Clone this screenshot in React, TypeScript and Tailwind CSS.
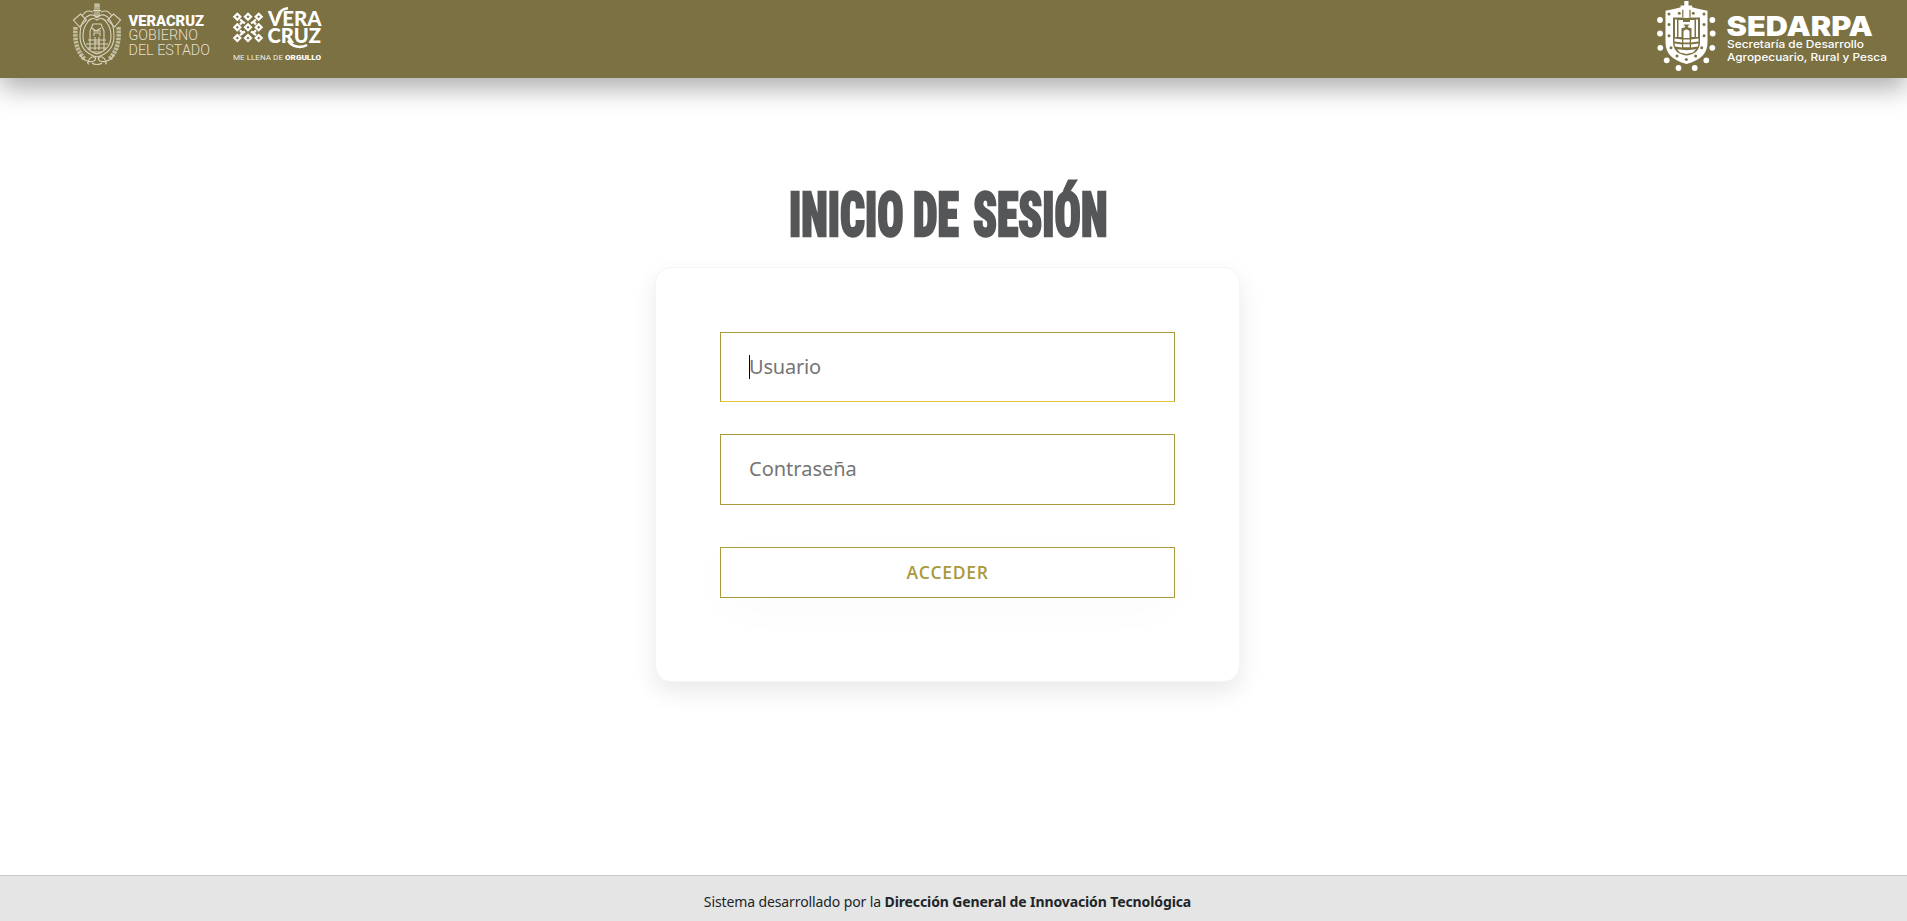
import type { ReactNode } from 'react';

const OLIVE = '#7b7142';

function StateLogo() {
  return (
    <svg viewBox="68 0 148 78" className="h-[78px] w-[148px]" role="img" aria-label="Veracruz Gobierno del Estado">
      <g fill="none" stroke="#d8d3bd" strokeWidth="1.1">
        <path d="M97 4v14M93 10.500h8M94.500 6h5M95 4h4v13h-4z" />
        <path d="M97 17c-5-4-10-2-13 3-3 4-4 10-4 16 0 11 6 18 17 21 11-3 17-10 17-21 0-6-1-12-4-16-3-5-8-7-13-3z" />
        <path d="M97 20c-4-3-8-1-10 3-3 4-4 8-4 13 0 9 5 15 14 18 9-3 14-9 14-18 0-5-1-9-4-13-2-4-6-6-10-3z" />
        <path d="M73.500 20l7-6 6 6-7 7zM120.500 20l-7-6-6 6 7 7zM82 16c3-5 7-6 11-4M112 16c-3-5-7-6-11-4" />
        <path d="M90 50V31l3-7h8l3 7v19M93 31h8M92 28l4 3 5-3M94 36v-3h6v3M94 42h6M88 40h18M86 44h22M88 48h18M92 52h10M95 37v13M99 37v13" />
        <path d="M80 54c2 6 9 9 14 7 3-2 1-5-2-4-3 1-6 7-3 7M114 54c-2 6-9 9-14 7-3-2-1-5 2-4 3 1 6 7 3 7M92 63c2 2 8 2 10 0" />
      </g>
      <g fill="none" stroke="#d5d0b8" strokeWidth="4.500" strokeDasharray="2.600 0.900" opacity="0.8">
        <path d="M75.500 27c-1 14 1 23 9 32" />
        <path d="M118.500 27c1 14-1 23-9 32" />
      </g>
      <g fill="#ffffff" fontFamily="Roboto, sans-serif" fontSize="15">
        <text x="128.500" y="26.300" fontWeight="900" textLength="75.500" lengthAdjust="spacingAndGlyphs">VERACRUZ</text>
        <text x="128.500" y="40.300" fill="#e3dfcf" fontWeight="300" textLength="69.500" lengthAdjust="spacingAndGlyphs">GOBIERNO</text>
        <text x="128.500" y="54.700" fill="#e3dfcf" fontWeight="300" textLength="81.500" lengthAdjust="spacingAndGlyphs">DEL ESTADO</text>
      </g>
    </svg>
  );
}

const knots = [16.7, 27.3, 38].flatMap((y) => [237.3, 248, 258.7].map((x) => ({ x, y })));

function PrideLogo() {
  return (
    <svg viewBox="228 0 100 78" className="h-[78px] w-[100px]" role="img" aria-label="Veracruz me llena de orgullo">
      <g fill="none" stroke="#ffffff" strokeWidth="2.200">
        {knots.map(({ x, y }) => (
          <path key={`${x}-${y}`} d={`M${x} ${y - 3}l3 3-3 3-3-3z`} />
        ))}
        <path d="M240 24.500l2.500-2.700 2.500 1.500M256 24.500l-2.500-2.700-2.500 1.500M240 30.300l2.500 2.700 2.500-1.500M256 30.300l-2.500 2.700-2.500-1.500" />
        <path d="M240 19.500l2.500 2.300M256 19.500l-2.500 2.300M240 35.300l2.500-2.300M256 35.300l-2.500-2.300" />
      </g>
      <g fill="#ffffff" fontFamily="Lato, sans-serif" fontWeight="900" fontSize="20">
        <text x="268" y="26" textLength="53.500" lengthAdjust="spacingAndGlyphs">VERA</text>
        <text x="267.500" y="42.800" textLength="53.500" lengthAdjust="spacingAndGlyphs">CRUZ</text>
      </g>
      <path d="M277 20c1.500-6 3-11 11-11.800" fill="none" stroke="#ffffff" strokeWidth="2.600" />
      <path d="M288 40.500c4 6.500 13 8 19 4.500" fill="none" stroke="#ffffff" strokeWidth="2.600" />
      <g fill="#eeece0" fontFamily="Roboto, sans-serif" fontSize="8">
        <text x="233" y="59.900" textLength="50" lengthAdjust="spacingAndGlyphs">ME LLENA DE</text>
        <text x="285" y="59.900" fill="#ffffff" fontWeight="900" textLength="36" lengthAdjust="spacingAndGlyphs">ORGULLO</text>
      </g>
    </svg>
  );
}

const studs = [
  [10, 20], [10, 33.5], [10.3, 47.8], [16.7, 60.3], [28.5, 68], [44.7, 68], [56.3, 60.3], [62.3, 47.8], [62.7, 33.5], [62.3, 20],
];
const rivets = [
  [19, 14], [19, 24.5], [19, 35.7], [21, 47.7], [27, 56], [36.3, 59.4], [45.6, 56], [51.7, 47.7], [54, 35.7], [54, 24.5], [54, 14], [29.3, 13.3], [43.3, 13.3],
];

function SedarpaLogo() {
  return (
    <svg viewBox="1650 0 242 78" className="h-[78px] w-[242px]" role="img" aria-label="SEDARPA">
      <g transform="translate(1650 0)">
        <path fill="#ffffff" d="M15.500 10.800L24 9l8-2h9l8 2 8.500 1.800V42c0 12-7 18-21 22-14-4-21-10-21-22z" />
        <path fill={OLIVE} d="M23 17.500h27V42c0 8-5 12.500-13.500 13.500C28 54.500 23 50 23 42z" />
        <path fill="none" stroke={OLIVE} strokeWidth="1.200" d="M32.800 8v9M40 8v9" />
        <path fill="#ffffff" d="M34.300 1h4.200v4.500h3.700v4.200h-3.700V18h-4.200V9.700h-3.700V5.500h3.700z" />
        <path fill="#ffffff" d="M25 19.500h2V37h-2zM46 19.500h2V37h-2zM28.500 20h3v17h-3zM41.500 20h3v17h-3zM31.500 20H33v2h7v-2h1.500v8h-2.300v-3.500h-5.400V28h-2.300z" />
        <path fill="#ffffff" d="M33.500 38v-6c0-3.500 6-3.500 6 0v6z" />
        <path fill="#ffffff" d="M24.500 38.500l7.500 1v3l-7.500-1zM48.500 38.500l-7.500 1v3l7.500-1zM33.300 39.500h6.400v3h-6.400zM24.500 43.500l7.500 1v3l-7-1zM48.500 43.500l-7.500 1v3l7-1zM33.300 44.200h6.400v3h-6.400zM27 49.300l9.500 1 9.500-1-3 3.200-6.500 1.500-6.500-1.500z" />
        <g fill={OLIVE}>
          {rivets.map(([x, y]) => (
            <circle key={`${x}-${y}`} cx={x} cy={y} r="1.500" />
          ))}
        </g>
        <g fill="#ffffff">
          <circle cx="34.300" cy="26.500" r="0.900" />
          <circle cx="38.700" cy="26.500" r="0.900" />
          {studs.map(([x, y]) => (
            <circle key={`${x}-${y}`} cx={x} cy={y} r="2.900" />
          ))}
        </g>
      </g>
      <g fill="#ffffff" fontFamily="Inter, sans-serif">
        <text x="1726.500" y="35.500" fontSize="27" fontWeight="900" textLength="146.500" lengthAdjust="spacingAndGlyphs">SEDARPA</text>
        <text x="1727" y="47.700" fontSize="11" fontWeight="500" textLength="137" lengthAdjust="spacingAndGlyphs">Secretaría de Desarrollo</text>
        <text x="1727" y="61.300" fontSize="11" fontWeight="500" textLength="160" lengthAdjust="spacingAndGlyphs">Agropecuario, Rural y Pesca</text>
      </g>
    </svg>
  );
}

function TitleWord({ className, children }: { className: string; children: ReactNode }) {
  return (
    <span className={className}>
      <span className="inline-block origin-left scale-x-[0.715] [-webkit-text-stroke:2.4px_#555658]">{children}</span>
    </span>
  );
}

export default function App() {
  return (
    <div className="flex h-[921px] flex-col overflow-hidden bg-white font-['Noto_Sans',sans-serif]">
      <header className="flex h-[78px] shrink-0 bg-[#7b7142] pr-[15px] pl-[68px] shadow-[0_10px_25px_rgba(0,0,0,0.33)]">
        <StateLogo />
        <div className="ml-3 flex flex-1 justify-between">
          <PrideLogo />
          <SedarpaLogo />
        </div>
      </header>

      <main className="flex flex-1 flex-col items-center pt-[98px] pr-3">
        <h1 className="mr-[3px] flex h-[78px] w-[315px] justify-between font-['Roboto',sans-serif] text-[61px] leading-[78px] font-black whitespace-nowrap text-[#555658] [font-stretch:75%]">
          <TitleWord className="w-[110px]">INICIO</TitleWord>
          <TitleWord className="w-[46px]">DE</TitleWord>
          <TitleWord className="w-[131px]">SESIÓN</TitleWord>
        </h1>

        <form className="mt-[13px] flex h-[415px] w-[585px] flex-col rounded-2xl border border-[#f5f5f5] bg-white px-[64px] pt-16 shadow-[0_10px_24px_rgba(0,0,0,0.09)]">
          <div className="relative">
            <input
              className="h-[70px] w-full border border-[#a99a3c] border-b-[#e3c53c] px-7 pb-0.5 text-xl tracking-[-0.2px] text-[#212529] outline-none placeholder:text-[#757575]"
              placeholder="Usuario"
            />
            <span className="absolute top-[23px] left-[29px] h-6 w-px bg-black" />
          </div>
          <input
            type="password"
            className="mt-8 h-[71px] w-full border border-[#a99a3c] px-7 pb-0.5 text-xl outline-none placeholder:text-[#757575]"
            placeholder="Contraseña"
          />
          <button
            type="button"
            className="mt-[42px] h-[51px] w-full border border-[#a99a3c] bg-white font-['Open_Sans',sans-serif] text-[17.500px] font-semibold tracking-[0.7px] text-[#a99a3c] shadow-[0_10px_50px_rgba(0,0,0,0.02)]"
          >
            ACCEDER
          </button>
        </form>
      </main>

      <footer className="flex h-[46px] shrink-0 justify-center border-t border-[#c9cccb] bg-[#e5e5e5] pt-4 pr-3 text-sm tracking-[-0.11px] text-[#212529]">
        <p>
          Sistema desarrollado por la <b>Dirección General de Innovación Tecnológica</b>
        </p>
      </footer>
    </div>
  );
}
